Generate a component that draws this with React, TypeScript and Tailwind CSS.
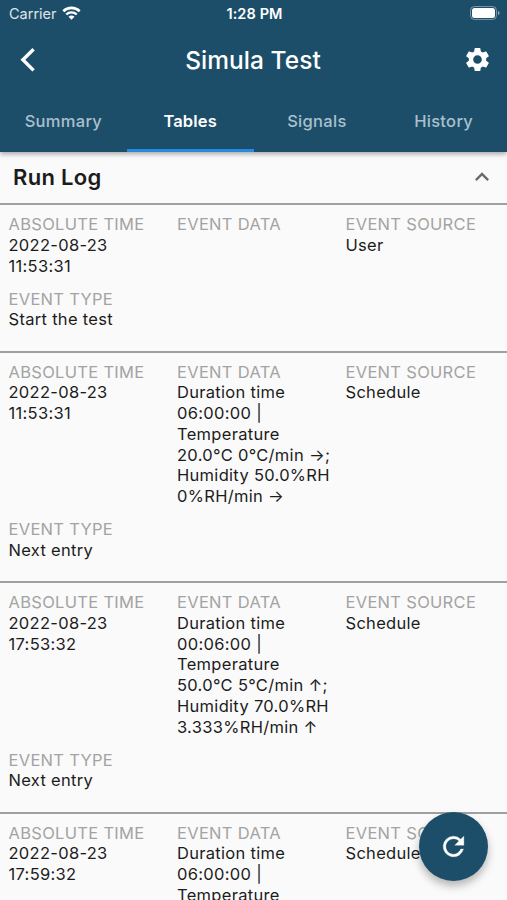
import { MdExpandLess, MdSettings } from "react-icons/md";

type LogEntry = {
  date: string;
  time: string;
  data: string[];
  source: string;
  type: string;
};

const tabs = ["Summary", "Tables", "Signals", "History"];

const entries: LogEntry[] = [
  {
    date: "2022-08-23",
    time: "11:53:31",
    data: [],
    source: "User",
    type: "Start the test",
  },
  {
    date: "2022-08-23",
    time: "11:53:31",
    data: [
      "Duration time",
      "06:00:00 |",
      "Temperature",
      "20.0°C 0°C/min →;",
      "Humidity 50.0%RH",
      "0%RH/min →",
    ],
    source: "Schedule",
    type: "Next entry",
  },
  {
    date: "2022-08-23",
    time: "17:53:32",
    data: [
      "Duration time",
      "00:06:00 |",
      "Temperature",
      "50.0°C 5°C/min ↑;",
      "Humidity 70.0%RH",
      "3.333%RH/min ↑",
    ],
    source: "Schedule",
    type: "Next entry",
  },
  {
    date: "2022-08-23",
    time: "17:59:32",
    data: ["Duration time", "06:00:00 |", "Temperature"],
    source: "Schedule",
    type: "",
  },
];

function BackIcon() {
  return (
    <svg width="28" height="28" viewBox="0 0 28 28" fill="none">
      <path d="M19.6 3.2 8.9 13.8l10.700 10.600" stroke="currentColor" strokeWidth="3.400" />
    </svg>
  );
}

function RefreshIcon() {
  return (
    <svg width="31" height="31" viewBox="0 0 24 24" fill="currentColor">
      <path
        d="M17.65 6.35A7.958 7.958 0 0 0 12 4a8 8 0 1 0 7.730 10h-2.080A6 6 0 1 1 12 6c1.660 0 3.140.69 4.220 1.780L13 11h7V4l-2.350 2.350z"
        stroke="currentColor"
        strokeWidth="0.25"
      />
    </svg>
  );
}

function StatusBar() {
  return (
    <div className="grid h-7 grid-cols-3 items-center pr-[7px] pl-[9px]">
      <div className="flex items-center gap-[5px] text-[14.5px] text-white/85">
        Carrier
        <svg width="19" height="14" viewBox="0 0 19 14" fill="none" className="-mt-[2px]">
          <path d="M1.3 5.2a11.7 11.7 0 0 1 16.4 0" stroke="white" strokeWidth="2.6" />
          <path d="M4.3 8.5a7.4 7.4 0 0 1 10.4 0" stroke="white" strokeWidth="2.4" />
          <path d="M6.5 10.7a4.2 4.2 0 0 1 6 0L9.5 13.8z" fill="white" />
        </svg>
      </div>
      <div className="text-center text-[14.5px] font-semibold tracking-[0.1px]">1:28 PM</div>
      <svg className="-mt-[2px] justify-self-end" width="30" height="14" viewBox="0 0 30 14">
        <rect x="0.5" y="0.5" width="26" height="13" rx="4" fill="none" stroke="white" strokeOpacity="0.4" />
        <rect x="2" y="2" width="23" height="10" rx="2.5" fill="white" />
        <path d="M28 5v4c1-.4 1.6-1.1 1.6-2S29 5.4 28 5z" fill="white" fillOpacity="0.5" />
      </svg>
    </div>
  );
}

function Field({ label, lines }: { label: string; lines: string[] }) {
  return (
    <div className="whitespace-nowrap">
      <div className="text-[#a3a3a3]">{label}</div>
      {lines.map((line) => (
        <div key={line}>{line}</div>
      ))}
    </div>
  );
}

function LogRow({ entry }: { entry: LogEntry }) {
  return (
    <div className="grid grid-cols-[168.5px_168.5px_1fr] gap-y-[12.25px] border-b-2 border-[#a0a0a0] pt-[9px] pb-[20.5px] pl-[8.5px]">
      <Field label="ABSOLUTE TIME" lines={[entry.date, entry.time]} />
      <Field label="EVENT DATA" lines={entry.data} />
      <Field label="EVENT SOURCE" lines={[entry.source]} />
      {entry.type && <Field label="EVENT TYPE" lines={[entry.type]} />}
    </div>
  );
}

export default function App() {
  return (
    <div className="relative flex h-[900px] w-full flex-col overflow-hidden bg-[#fafafa] font-['Inter','Liberation_Sans',sans-serif] text-[#1c1c1c]">
      <header className="z-10 h-[152px] shrink-0 bg-[#1d4e69] text-white shadow-[0_2px_5px_rgba(0,0,0,0.35)]">
        <StatusBar />
        <div className="grid h-16 grid-cols-[1fr_auto_1fr] items-center pr-[15px] pl-[14px]">
          <BackIcon />
          <h1 className="text-[24.5px] font-medium tracking-[0.05px]">Simula Test</h1>
          <MdSettings size={29} className="-mt-px justify-self-end" />
        </div>
        <nav className="grid h-[60px] grid-cols-4">
          {tabs.map((tab) => (
            <button
              key={tab}
              className={
                tab === "Tables"
                  ? "border-b-[3px] border-[#268be0] pt-px text-[16.5px] font-semibold tracking-[0.15px]"
                  : "border-b-[3px] border-transparent pt-px text-[16.5px] font-medium tracking-[0.3px] text-[#a9c0cf]"
              }
            >
              {tab}
            </button>
          ))}
        </nav>
      </header>

      <div className="flex h-[53px] shrink-0 items-center justify-between border-b-2 border-[#a0a0a0] pr-[11px] pl-[13px]">
        <h2 className="text-[22px] font-semibold tracking-[0.3px]">Run Log</h2>
        <MdExpandLess size={28} className="-mt-[2px] text-[#6b6b6b]" />
      </div>

      <main className="text-[16.5px] leading-[20.75px] tracking-[0.3px]">
        {entries.map((entry, i) => (
          <LogRow key={i} entry={entry} />
        ))}
      </main>

      <button className="absolute top-[812px] left-[419px] flex size-[69px] items-center justify-center rounded-full bg-[#1d4e69] text-white shadow-[0_5px_8px_rgba(0,0,0,0.28)]">
        <RefreshIcon />
      </button>
    </div>
  );
}
